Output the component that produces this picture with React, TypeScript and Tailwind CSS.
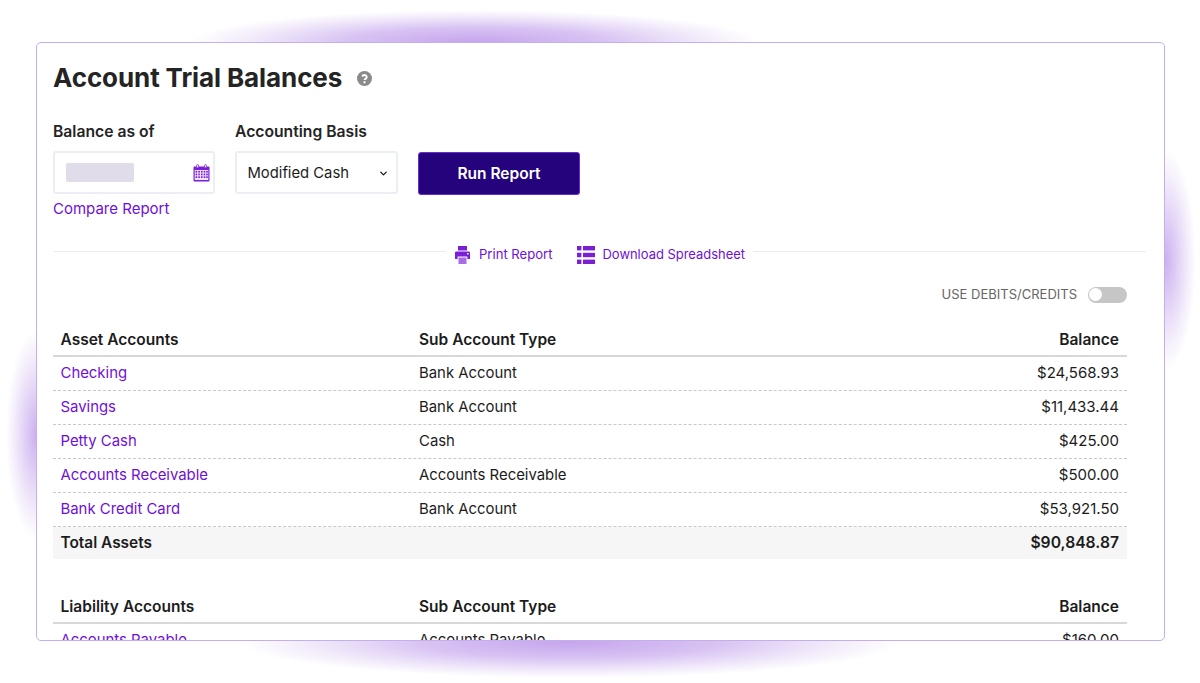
import { ChevronDown } from "lucide-react";

const PURPLE = "text-[#6f10d8]";

const assets = [
  { name: "Checking", type: "Bank Account", balance: "$24,568.93" },
  { name: "Savings", type: "Bank Account", balance: "$11,433.44" },
  { name: "Petty Cash", type: "Cash", balance: "$425.00" },
  { name: "Accounts Receivable", type: "Accounts Receivable", balance: "$500.00" },
  { name: "Bank Credit Card", type: "Bank Account", balance: "$53,921.50" },
];

const HelpIcon = () => (
  <svg width="15" height="15" viewBox="0 0 24 24" fill="none">
    <circle cx="12" cy="12" r="12" fill="#8a8a8a" />
    <path d="M8.4 9a3.7 3.7 0 0 1 7.2 1.1c0 2.4-3.6 2.6-3.6 4.4" stroke="#fff" strokeWidth="3" />
    <rect x="10.4" y="16.4" width="3.2" height="3.2" fill="#fff" />
  </svg>
);

const CalendarIcon = () => (
  <svg width="17" height="18" viewBox="0 0 17 18" className="text-[#7a1fd6]">
    <path fill="currentColor" d="M1.5 2.5H4V1h1.5v1.5h6V1H13v1.5h2.5a1 1 0 0 1 1 1v13a1 1 0 0 1-1 1h-14a1 1 0 0 1-1-1v-13a1 1 0 0 1 1-1Z" />
    <rect x="1.7" y="6" width="13.6" height="10" fill="#efe4fb" />
    {[2.6, 5.3, 8, 10.7, 13.2].map((x) =>
      [6.9, 9.6, 12.3].map((y) => (
        <rect key={`${x}-${y}`} x={x} y={y} width="1.6" height="1.7" fill="currentColor" />
      )),
    )}
    <rect x="3.6" y="0.6" width="1.8" height="3.2" rx="0.6" fill="#fff" stroke="currentColor" strokeWidth="0.7" />
    <rect x="11.6" y="0.6" width="1.8" height="3.2" rx="0.6" fill="#fff" stroke="currentColor" strokeWidth="0.7" />
  </svg>
);

const PrintIcon = () => (
  <svg width="15" height="18" viewBox="0 0 15 18" className="text-[#7a1fd6]">
    <path fill="currentColor" d="M3 0h9v4.5H3z" />
    <path fill="currentColor" d="M1.2 5.5h12.6A1.2 1.2 0 0 1 15 6.7V13h-2.6v-2.6H2.6V13H0V6.7a1.2 1.2 0 0 1 1.2-1.2Z" />
    <path fill="currentColor" fillOpacity="0.65" d="M3.5 11.5h8V18h-8z" />
    <rect x="12" y="7" width="1.6" height="1.4" fill="#fff" />
  </svg>
);

const ListIcon = () => (
  <svg width="18" height="18" viewBox="0 0 18 18" className="text-[#7a1fd6]">
    {[0, 6.8, 13.6].map((y) => (
      <g key={y} fill="currentColor">
        <rect x="0" y={y} width="4.4" height="4.4" />
        <rect x="6" y={y} width="12" height="4.4" />
      </g>
    ))}
  </svg>
);

const HeaderRow = ({ title }: { title: string }) => (
  <div className="flex h-[34px] items-center border-b-2 border-[#d8d8d8] pl-[7.5px] pr-2 pt-px text-[15.5px] font-semibold text-[#1c1c1c]">
    <span className="w-[358.5px]">{title}</span>
    <span className="flex-1">Sub Account Type</span>
    <span>Balance</span>
  </div>
);

const Row = ({ name, type, balance }: { name: string; type: string; balance: string }) => (
  <div className="flex h-[34px] shrink-0 items-center border-b border-dashed border-[#c8c8c8] pl-[7.5px] pr-2 text-[14.9px] text-[#1c1c1c]">
    <a className={`w-[358.5px] ${PURPLE}`}>{name}</a>
    <span className="flex-1">{type}</span>
    <span className="text-[15px]">{balance}</span>
  </div>
);

export default function App() {
  return (
    <div className="relative h-[683px] w-[1200px] overflow-hidden bg-white px-[36px] pt-[42px] font-['Inter',sans-serif]">
      {/* glow behind the card */}
      <div className="absolute left-[190px] top-[10px] h-[64px] w-[570px] rounded-[50%] bg-[radial-gradient(closest-side,#c6a5ed_0%,#d8c3f3_45%,#f1e9fa_78%,#ffffff00_100%)]" />
      <div className="absolute left-[240px] top-[606px] h-[72px] w-[660px] rounded-[50%] bg-[radial-gradient(closest-side,#c6a5ed_0%,#d8c3f3_45%,#f1e9fa_78%,#ffffff00_100%)]" />
      <div className="absolute left-[6px] top-[330px] h-[210px] w-[60px] rounded-[50%] bg-[radial-gradient(closest-side,#cdb0ef_0%,#e2d2f6_40%,#f4eefb_75%,#ffffff00_100%)]" />
      <div className="absolute left-[1136px] top-[150px] h-[220px] w-[60px] rounded-[50%] bg-[radial-gradient(closest-side,#cdb0ef_0%,#e2d2f6_40%,#f4eefb_75%,#ffffff00_100%)]" />

      <div className="relative h-[599px] w-[1129px] overflow-hidden rounded-[5px] border border-[#c3aeee] bg-white pl-4 pr-[18px] pt-[19px]">
        <div className="flex items-center gap-[15px]">
          <h1 className="text-[26px] font-bold leading-[32px] tracking-[-0.1px] text-[#242424]">
            Account Trial Balances
          </h1>
          <HelpIcon />
        </div>

        <div className="mt-[29px] flex items-start gap-5">
          <div className="w-[162px]">
            <div className="text-[15.7px] font-semibold leading-[18px] text-[#242424]">Balance as of</div>
            <div className="mt-[10px] flex h-[43px] items-center justify-between rounded-[3px] border-2 border-[#ebeff5] pl-[11px] pr-[3px]">
              <div className="h-[19px] w-[68px] rounded-[2px] bg-[#e0dcea]" />
              <CalendarIcon />
            </div>
            <a className={`mt-[5px] block text-[15px] leading-[20px] ${PURPLE}`}>Compare Report</a>
          </div>
          <div className="w-[163px]">
            <div className="text-[15.7px] font-semibold leading-[18px] text-[#242424]">Accounting Basis</div>
            <div className="mt-[10px] flex h-[43px] items-center justify-between rounded-[3px] border-2 border-[#ebeff5] pl-[10.5px] pr-[7px] pt-px text-[14.8px] text-[#1c1c1c]">
              <span>Modified Cash</span>
              <ChevronDown size={11} strokeWidth={3} />
            </div>
          </div>
          <button className="mt-[29px] h-[43px] w-[162px] rounded-[3px] border border-[#6a2bd0] bg-[#24037c] text-[15.5px] font-semibold text-white">
            Run Report
          </button>
        </div>

        <div className="mt-[20px] flex items-center">
          <div className="h-px flex-1 bg-[#ececec]" />
          <div className={`flex items-center pl-[9px] pr-[8px] pt-[6px] ${PURPLE}`}>
            <a className="flex items-center gap-[9px]">
              <PrintIcon />
              <span className="text-[13.1px]">Print Report</span>
            </a>
            <a className="ml-6 flex items-center gap-2">
              <ListIcon />
              <span className="text-[12.95px]">Download Spreadsheet</span>
            </a>
          </div>
          <div className="h-px flex-1 bg-[#ececec]" />
        </div>

        <div className="mr-[19px]">
          <div className="mt-[22px] flex h-4 items-center justify-end gap-[11px]">
            <span className="text-[13px] text-[#666666]">USE DEBITS/CREDITS</span>
            <div className="flex h-4 w-[39px] items-center rounded-full bg-[#c6c6c6] pl-px">
              <div className="h-[13px] w-[13px] rounded-full bg-white" />
            </div>
          </div>

          <div className="mt-[20px]">
            <HeaderRow title="Asset Accounts" />
            {assets.map((a) => (
              <Row key={a.name} {...a} />
            ))}
            <div className="flex h-[32px] items-center bg-[#f6f6f6] pl-[7.5px] pr-2 text-[15.4px] font-semibold text-[#1c1c1c]">
              <span className="flex-1">Total Assets</span>
              <span className="text-[15.7px]">$90,848.87</span>
            </div>
          </div>

          <div className="mt-[31px]">
            <HeaderRow title="Liability Accounts" />
            <Row name="Accounts Payable" type="Accounts Payable" balance="$160.00" />
          </div>
        </div>
      </div>
    </div>
  );
}
